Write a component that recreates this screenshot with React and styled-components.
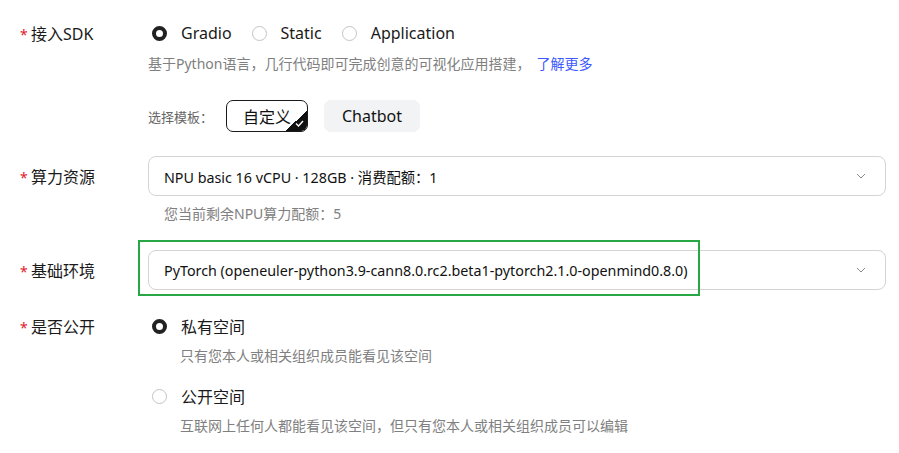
import styled, { createGlobalStyle } from "styled-components"

const GlobalStyle = createGlobalStyle`
  body {
    margin: 0;
    background: #fff;
    font-family: "Noto Sans", "Noto Sans CJK SC", sans-serif;
    color: #1a1a1a;
  }
`

function Radio({ checked, children }) {
    return (
        <RadioItem>
            <RadioDot checked={checked} />
            <RadioText>{children}</RadioText>
        </RadioItem>
    )
}

function Chevron() {
    return (
        <svg width="10" height="6" viewBox="0 0 10 6">
            <polyline points="1,1 5,5 9,1" fill="none" stroke="#8a8a8a" strokeWidth="1" />
        </svg>
    )
}

function Select({ children }) {
    return (
        <SelectBox>
            <SelectValue>{children}</SelectValue>
            <Chevron />
        </SelectBox>
    )
}

function App() {
    return (
        <Page>
            <GlobalStyle />
            <FormItem>
                <Label height={24}><Star>*</Star>接入SDK</Label>
                <Content>
                    <RadioGroup>
                        <Radio checked>Gradio</Radio>
                        <Radio>Static</Radio>
                        <Radio>Application</Radio>
                    </RadioGroup>
                    <Desc>
                        基于Python语言，几行代码即可完成创意的可视化应用搭建，
                        <Link>了解更多</Link>
                    </Desc>
                    <TemplateRow>
                        <TemplateLabel>选择模板：</TemplateLabel>
                        <TemplateButton active>
                            自定义
                            <Corner>
                                <svg width="9" height="7" viewBox="0 0 9 7">
                                    <polyline points="1,3.5 3.5,6 8,1" fill="none" stroke="#fff" strokeWidth="1.4" />
                                </svg>
                            </Corner>
                        </TemplateButton>
                        <TemplateButton>Chatbot</TemplateButton>
                    </TemplateRow>
                </Content>
            </FormItem>

            <FormItem gap={24}>
                <Label height={40}><Star>*</Star>算力资源</Label>
                <Content>
                    <Select>NPU basic 16 vCPU · 128GB · 消费配额：1</Select>
                    <Hint>您当前剩余NPU算力配额：5</Hint>
                </Content>
            </FormItem>

            <FormItem gap={26}>
                <Label height={40}><Star>*</Star>基础环境</Label>
                <Content>
                    <Highlighted>
                        <Select>PyTorch (openeuler-python3.9-cann8.0.rc2.beta1-pytorch2.1.0-openmind0.8.0)</Select>
                        <GreenFrame />
                    </Highlighted>
                </Content>
            </FormItem>

            <FormItem gap={24}>
                <Label height={24}><Star>*</Star>是否公开</Label>
                <Content>
                    <Radio checked>私有空间</Radio>
                    <OptionDesc>只有您本人或相关组织成员能看见该空间</OptionDesc>
                    <Spacer />
                    <Radio>公开空间</Radio>
                    <OptionDesc>互联网上任何人都能看见该空间，但只有您本人或相关组织成员可以编辑</OptionDesc>
                </Content>
            </FormItem>
        </Page>
    )
}

export default App

const Page = styled.div`
    padding: 21px 0 0 20px;
    width: 866px;
`
const FormItem = styled.div`
    display: grid;
    grid-template-columns: 128px 738px;
    margin-top: ${(p) => p.gap || 0}px;
`
const Label = styled.div`
    display: flex;
    align-items: center;
    height: ${(p) => p.height}px;
    font-size: 16px;
    color: #1a1a1a;
`
const Star = styled.span`
    color: #e0202a;
    font-size: 14px;
    width: 11px;
    margin-top: 2px;
`
const Content = styled.div`
    display: flex;
    flex-direction: column;
    align-items: flex-start;
`
const RadioGroup = styled.div`
    display: flex;
    gap: 16px;
`
const RadioItem = styled.label`
    display: flex;
    align-items: center;
    height: 24px;
    gap: 14px;
    margin-left: 4px;
`
const RadioDot = styled.span`
    box-sizing: border-box;
    width: 15px;
    height: 15px;
    border-radius: 50%;
    border: ${(p) => (p.checked ? "4.5px solid #222" : "1px solid #c4c4c4")};
    background: #fff;
`
const RadioText = styled.span`
    font-size: 16px;
    color: #1a1a1a;
`
const Desc = styled.div`
    margin-top: 9px;
    line-height: 20px;
    font-size: 14px;
    color: #808080;
`
const Link = styled.a`
    color: #3d5afe;
    margin-left: 6px;
`
const TemplateRow = styled.div`
    display: flex;
    align-items: center;
    margin-top: 26px;
`
const TemplateLabel = styled.span`
    font-size: 13px;
    color: #666;
    width: 78px;
`
const TemplateButton = styled.div`
    position: relative;
    box-sizing: border-box;
    height: 32px;
    display: flex;
    align-items: center;
    justify-content: center;
    padding: 0 16px;
    min-width: ${(p) => (p.active ? 82 : 96)}px;
    margin-right: 16px;
    border-radius: 7px;
    font-size: 16px;
    color: #111;
    overflow: hidden;
    border: ${(p) => (p.active ? "1px solid #1a1a1a" : "1px solid #f2f3f5")};
    background: ${(p) => (p.active ? "#fff" : "#f2f3f5")};
`
const Corner = styled.span`
    position: absolute;
    right: 0;
    bottom: 0;
    width: 22px;
    height: 20px;
    background: linear-gradient(to bottom right, transparent 50%, #111 50%);
    display: flex;
    align-items: flex-end;
    justify-content: flex-end;
    padding: 0 3px 4px 0;
    box-sizing: border-box;
`
const SelectBox = styled.div`
    box-sizing: border-box;
    width: 738px;
    height: 40px;
    border: 1px solid #d4d4d4;
    border-radius: 8px;
    display: flex;
    align-items: center;
    justify-content: space-between;
    padding: 0 19px 0 15px;
    background: #fff;
`
const SelectValue = styled.span`
    font-size: 14.3px;
    color: #111;
`
const Hint = styled.div`
    margin: 8px 0 0 16px;
    line-height: 20px;
    font-size: 14px;
    color: #808080;
`
const Highlighted = styled.div`
    position: relative;
`
const GreenFrame = styled.div`
    position: absolute;
    left: -10px;
    top: -10px;
    width: 562px;
    height: 56px;
    border: 2px solid #28a745;
    box-sizing: border-box;
    pointer-events: none;
`
const OptionDesc = styled.div`
    margin: 8px 0 0 32px;
    line-height: 20px;
    font-size: 14px;
    color: #808080;
`
const Spacer = styled.div`
    height: 18px;
`
